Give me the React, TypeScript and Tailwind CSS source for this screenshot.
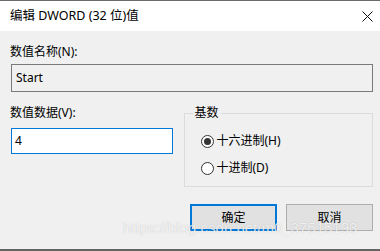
import React from 'react';

const font = { fontFamily: '"Noto Sans", "Noto Sans CJK SC", sans-serif' };

function Radio({ checked, label }: { checked?: boolean; label: string }) {
  return (
    <div className="flex items-center gap-[3px] h-[16px]">
      <span className="w-[13px] h-[13px] rounded-full border border-[#333] bg-white flex items-center justify-center shrink-0">
        {checked && <span className="w-[7px] h-[7px] rounded-full bg-[#333]" />}
      </span>
      <span className="text-[12px] leading-[16px] text-black">{label}</span>
    </div>
  );
}

export default function App() {
  return (
    <div
      className="relative w-[380px] h-[251px] flex flex-col bg-[#f0f0f0] overflow-hidden border-t border-[#6b6b6b]"
      style={font}
    >
      {/* title bar */}
      <div className="h-[30px] shrink-0 bg-white flex items-center justify-between pl-[10px] pr-[7px]">
        <span className="text-[12.5px] leading-[16px] text-black">编辑 DWORD (32 位)值</span>
        <svg width="11" height="11" viewBox="0 0 11 11">
          <path d="M0.5 0.5 L10.5 10.5 M10.5 0.5 L0.5 10.5" stroke="#111" strokeWidth="1" />
        </svg>
      </div>

      {/* body */}
      <div className="flex-1 flex flex-col pl-[10px] pr-[7px] border-b-2 border-[#646464]">
        <div className="mt-[13px] text-[12px] leading-[16px] text-black">数值名称(N):</div>
        <div className="mt-[4px] ml-[1px] h-[28px] border border-[#7a7a7a] bg-[#f0f0f0] flex items-center pl-[4px] text-[12px] text-black">
          Start
        </div>

        <div className="flex mt-[13px]">
          <div className="w-[163px] flex flex-col">
            <div className="text-[12px] leading-[16px] text-black">数值数据(V):</div>
            <div className="mt-[7px] ml-[1px] h-[26px] border border-[#0078d7] bg-white flex items-center pl-[3px] text-[12px] text-black">
              4
            </div>
          </div>
          <fieldset className="ml-[11px] w-[190px] h-[82px] border border-[#dcdcdc] pl-[16px] pr-[8px]">
            <legend className="px-[2px] ml-[-8px] text-[12px] leading-[16px] text-black">基数</legend>
            <div className="mt-[12px] flex flex-col gap-[11px]">
              <Radio checked label="十六进制(H)" />
              <Radio label="十进制(D)" />
            </div>
          </fieldset>
        </div>

        <div className="flex justify-end gap-[9px] mt-[17px]">
          <button className="w-[87px] h-[27px] border-2 border-[#0078d7] bg-[#e1e1e1] text-[12px] text-black">
            确定
          </button>
          <button className="w-[87px] h-[27px] border border-[#adadad] bg-[#e1e1e1] text-[12px] text-black">
            取消
          </button>
        </div>
      </div>

      {/* watermark */}
      <div
        className="absolute left-[123px] top-[218px] text-[15px] leading-[18px] text-white/80 pointer-events-none"
        style={{ fontFamily: '"Liberation Sans", Arial, sans-serif', textShadow: '0 0 1px rgba(0,0,0,0.25)' }}
      >
        https://blog.csdn.net/m0_37515193
      </div>
    </div>
  );
}
